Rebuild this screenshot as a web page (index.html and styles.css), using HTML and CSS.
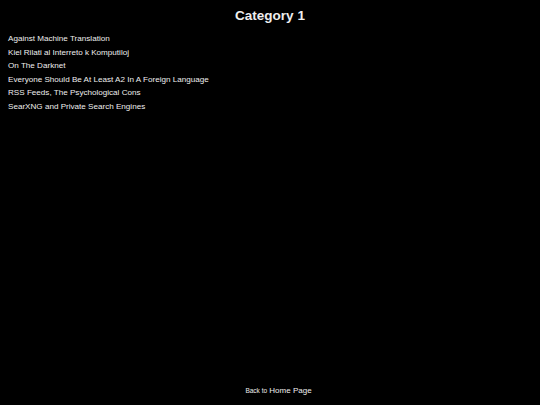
FILE: index.html
```html
<!DOCTYPE html>
<html lang="en">
<head>
<meta charset="utf-8">
<title>Category 1</title>
<link rel="stylesheet" href="styles.css">
</head>
<body>
<div class="page">
  <h1 class="title">Category 1</h1>
  <ul class="posts">
    <li><a href="#">Against Machine Translation</a></li>
    <li><a href="#">Kiel Rilati al Interreto k Komputiloj</a></li>
    <li><a href="#">On The Darknet</a></li>
    <li><a href="#">Everyone Should Be At Least A2 In A Foreign Language</a></li>
    <li><a href="#">RSS Feeds, The Psychological Cons</a></li>
    <li><a href="#">SearXNG and Private Search Engines</a></li>
  </ul>
  <footer class="footer"><span class="back">Back to</span> <a href="#">Home Page</a></footer>
</div>
</body>
</html>
```
FILE: styles.css
```css
html, body {
  margin: 0;
  padding: 0;
  background: #000;
  color: #eee;
  font-family: "Liberation Sans", Arial, sans-serif;
}
.page {
  display: flex;
  flex-direction: column;
  min-height: 405px;
  box-sizing: border-box;
  padding: 0 8px 8px;
}
a {
  color: #eee;
  text-decoration: none;
}
.title {
  font-size: 13.5px;
  font-weight: bold;
  line-height: 16px;
  margin: 8px 0 0;
  text-align: center;
}
.posts {
  list-style: none;
  margin: 8px 0 0;
  padding: 0;
  font-size: 8.1px;
  line-height: 13.6px;
}
.footer {
  margin-top: auto;
  padding-left: 17px;
  text-align: center;
  line-height: 12px;
  font-size: 8px;
}
.footer a {
  font-size: 8px;
}
.back {
  font-size: 6.5px;
}
```
